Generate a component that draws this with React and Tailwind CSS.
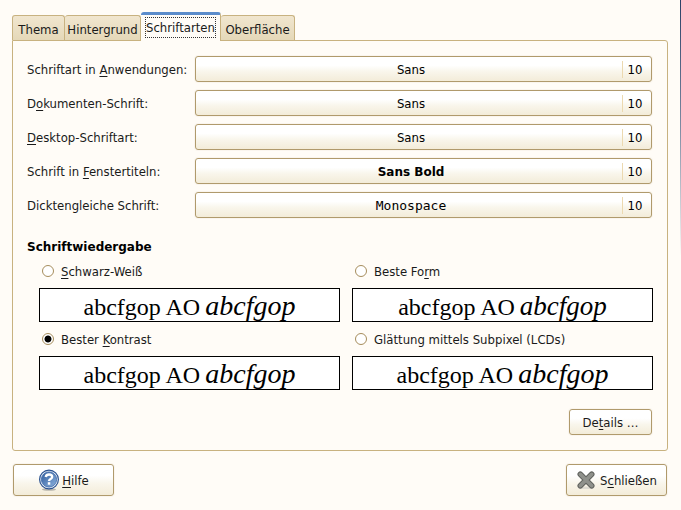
import React, { useState } from "react";

const buttonLook =
  "rounded-[3px] border border-[#b09a6c] bg-linear-to-b from-white from-35% via-[#f9f6ec] via-60% to-[#f3ecd9] shadow-[0_0_0_1px_#faf5ee]";

const tabs = [
  { name: "Thema", width: "w-[53px]" },
  { name: "Hintergrund", width: "w-[76px]" },
  { name: "Schriftarten", width: "w-[80px]", active: true },
  { name: "Oberfläche", width: "w-[74px]" },
];

const fonts = [
  { id: "app", label: ["Schriftart in ", "A", "nwendungen:"], value: "Sans" },
  { id: "doc", label: ["D", "o", "kumenten-Schrift:"], value: "Sans" },
  { id: "desk", label: ["", "D", "esktop-Schriftart:"], value: "Sans" },
  {
    id: "title",
    label: ["Schrift in ", "F", "enstertiteln:"],
    value: "Sans Bold",
    look: "font-['DejaVu_Sans',sans-serif] text-[12px] font-bold",
  },
  {
    id: "mono",
    label: ["Dicktengleiche Schrift:", "", ""],
    value: "Monospace",
    look: "font-['DejaVu_Sans_Mono',monospace]",
  },
];

const renderings = [
  { id: "mono", label: ["", "S", "chwarz-Weiß"], italic: "text-[28px]" },
  { id: "shapes", label: ["Beste Fo", "r", "m"], italic: "text-[27px]" },
  { id: "contrast", label: ["Bester ", "K", "ontrast"], italic: "text-[28px]" },
  { id: "subpixel", label: ["Glättung mittels Subpixel (LCDs)", "", ""], italic: "text-[28px]" },
];

function Mnemonic({ parts }) {
  return (
    <span className="inline-block pt-0.5 align-middle whitespace-pre">
      {parts[0]}
      <span className="underline underline-offset-2">{parts[1]}</span>
      {parts[2]}
    </span>
  );
}

function HelpIcon() {
  return (
    <svg width="22" height="22" viewBox="0 0 22 22" aria-hidden="true">
      <defs>
        <linearGradient id="help" x1="0" y1="0" x2="1" y2="1">
          <stop offset="0" stopColor="#2f5c9c" />
          <stop offset="1" stopColor="#8db2de" />
        </linearGradient>
      </defs>
      <ellipse cx="11" cy="20.5" rx="7" ry="1.3" fill="#b9b6ad" />
      <circle cx="11" cy="10.5" r="9.4" fill="#e9f0f8" stroke="#2c5391" strokeWidth="1.2" />
      <circle cx="11" cy="10.5" r="7.6" fill="url(#help)" stroke="#3a67a8" strokeWidth=".8" />
      <path d="M7.7 8C8 6.2 9.3 5.5 11 5.5c1.9 0 3.2.9 3.2 2.5 0 2.1-3.2 2-3.2 4" fill="none" stroke="#fff" strokeWidth="2.3" />
      <rect x="9.8" y="13.2" width="2.5" height="2.5" fill="#fff" />
    </svg>
  );
}

function CloseIcon() {
  return (
    <svg width="20" height="20" viewBox="0 0 20 20" aria-hidden="true">
      <ellipse cx="10" cy="17.8" rx="8.5" ry="1.2" fill="#dedbd2" />
      <path d="M4.3 4.3l11.4 11.4M15.7 4.3L4.3 15.7" stroke="#60625e" strokeWidth="5.6" strokeLinecap="round" />
      <path d="M4.3 4.3l11.4 11.4M15.7 4.3L4.3 15.7" stroke="#8f918c" strokeWidth="3.6" strokeLinecap="round" />
    </svg>
  );
}

export default function App() {
  const [mode, setMode] = useState("contrast");
  return (
    <main className="relative min-h-screen bg-[#fffcf7] pt-3 pr-[13px] pb-3 pl-3 font-['DejaVu_Sans_Condensed','DejaVu_Sans',sans-serif] text-[13px] leading-4 text-[#1a1a1a]">
      <div className="absolute top-0 right-0 h-64 w-px bg-linear-to-b from-[#2b4066] via-[#7f8ca3] to-[#fffcf7]" />
      <div role="tablist" className="flex items-end">
        {tabs.map((t) =>
          t.active ? (
            <button
              key={t.name}
              role="tab"
              aria-selected="true"
              className={`${t.width} z-10 -mb-px h-[29px] rounded-t-[3px] border-t-3 border-r border-t-[#5b8ccb] border-r-[#c8b280] bg-[#fffcf7] px-1 pt-px pb-[3px]`}
            >
              <span className="flex h-[21px] items-center justify-center border border-dotted border-[#333] pt-0.5">{t.name}</span>
            </button>
          ) : (
            <button
              key={t.name}
              role="tab"
              aria-selected="false"
              className={`${t.width} h-[25px] rounded-t-[3px] border-t border-r border-[#c8b280] bg-linear-to-b from-[#f1e6cf] to-[#e5d8b8] pt-[3px] first:border-l`}
            >
              {t.name}
            </button>
          )
        )}
      </div>
      <section className="rounded-b-[3px] rounded-tr-[3px] border border-[#c8b280] px-[14px] py-[15px]">
        <div className="flex flex-col gap-2 pr-px">
          {fonts.map((f) => (
            <div key={f.id} className="flex items-center">
              <label htmlFor={f.id} className="w-[168px] shrink-0">
                <Mnemonic parts={f.label} />
              </label>
              <button id={f.id} className={`${buttonLook} flex h-[26px] flex-1 items-center text-black`}>
                <span className={`flex-1 pt-0.5 pl-1 ${f.look || ""}`}>{f.value}</span>
                <span className="w-[29px] border-l border-[#ecd9b0] pt-px pr-1">10</span>
              </button>
            </div>
          ))}
        </div>
        <h2 className="mt-[21px] font-['DejaVu_Sans',sans-serif] text-[12px] font-bold text-black">Schriftwiedergabe</h2>
        <div className="mt-2 grid grid-cols-2 gap-x-3 gap-y-[9px] pl-3">
          {renderings.map((r) => (
            <label key={r.id} className="block">
              <span className="flex h-4 items-center gap-[7px] pl-[3px]">
                <input
                  type="radio"
                  name="rendering"
                  checked={mode === r.id}
                  onChange={() => setMode(r.id)}
                  className="size-3 appearance-none rounded-full border border-[#a68d5c] bg-white checked:bg-radial checked:from-black checked:from-40% checked:to-white checked:to-55%"
                />
                <Mnemonic parts={r.label} />
              </span>
              <span className="mt-[9px] flex h-[34px] items-baseline justify-center gap-[5px] overflow-hidden border border-black bg-white pt-[3px] font-['Liberation_Serif',serif] text-[24px] leading-7 text-black">
                <span>abcfgop AO</span>
                <em className={r.italic}>abcfgop</em>
              </span>
            </label>
          ))}
        </div>
        <div className="mt-[19px] flex justify-end pr-px">
          <button className={`${buttonLook} h-[26px] w-[83px]`}>
            <Mnemonic parts={["De", "t", "ails …"]} />
          </button>
        </div>
      </section>
      <footer className="mt-[13px] flex justify-between px-px">
        <button className={`${buttonLook} flex h-8 w-[101px] items-center justify-center gap-[2px]`}>
          <HelpIcon />
          <Mnemonic parts={["", "H", "ilfe"]} />
        </button>
        <button className={`${buttonLook} flex h-8 w-[101px] items-center justify-center gap-1`}>
          <CloseIcon />
          <Mnemonic parts={["S", "c", "hließen"]} />
        </button>
      </footer>
    </main>
  );
}
